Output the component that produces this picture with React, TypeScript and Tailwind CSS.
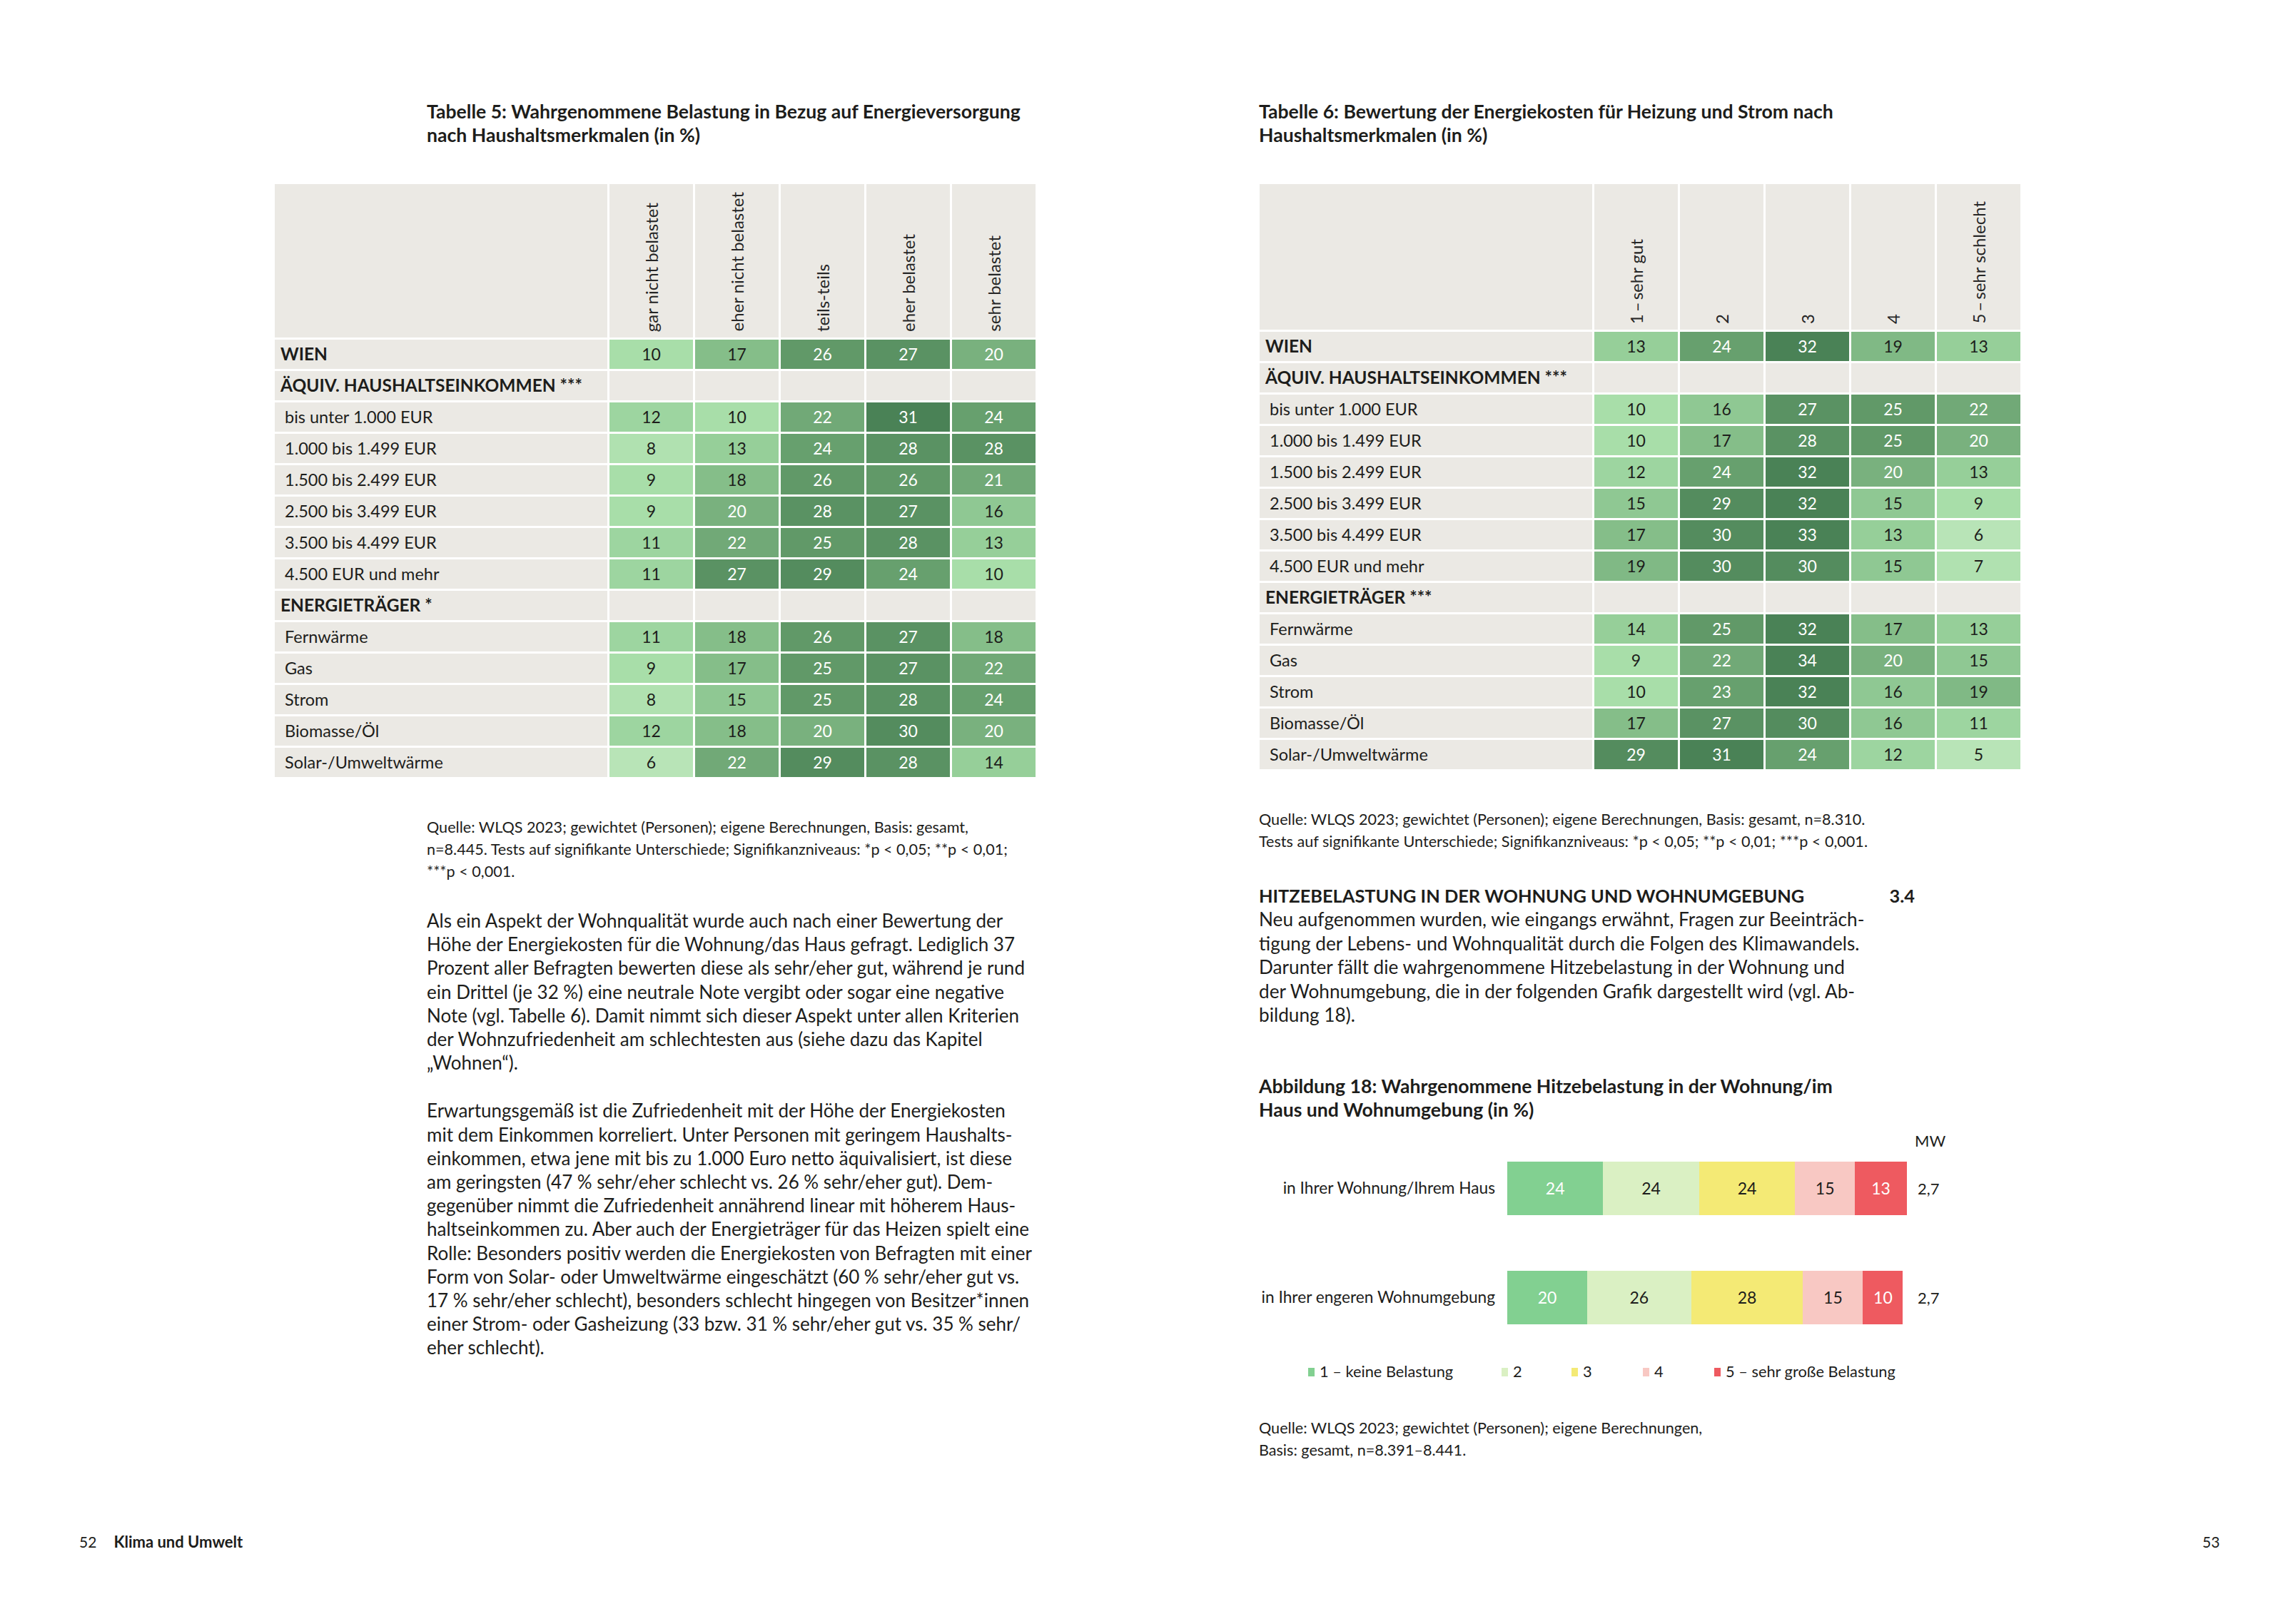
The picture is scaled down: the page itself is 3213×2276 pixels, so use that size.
import React from 'react';

type Row = { label: string; kind: 'total' | 'group' | 'item'; values?: number[] };

const table5: Row[] = [
    { label: 'WIEN', kind: 'total', values: [10, 17, 26, 27, 20] },
    { label: 'ÄQUIV. HAUSHALTSEINKOMMEN ***', kind: 'group' },
    { label: 'bis unter 1.000 EUR', kind: 'item', values: [12, 10, 22, 31, 24] },
    { label: '1.000 bis 1.499 EUR', kind: 'item', values: [8, 13, 24, 28, 28] },
    { label: '1.500 bis 2.499 EUR', kind: 'item', values: [9, 18, 26, 26, 21] },
    { label: '2.500 bis 3.499 EUR', kind: 'item', values: [9, 20, 28, 27, 16] },
    { label: '3.500 bis 4.499 EUR', kind: 'item', values: [11, 22, 25, 28, 13] },
    { label: '4.500 EUR und mehr', kind: 'item', values: [11, 27, 29, 24, 10] },
    { label: 'ENERGIETRÄGER *', kind: 'group' },
    { label: 'Fernwärme', kind: 'item', values: [11, 18, 26, 27, 18] },
    { label: 'Gas', kind: 'item', values: [9, 17, 25, 27, 22] },
    { label: 'Strom', kind: 'item', values: [8, 15, 25, 28, 24] },
    { label: 'Biomasse/Öl', kind: 'item', values: [12, 18, 20, 30, 20] },
    { label: 'Solar-/Umweltwärme', kind: 'item', values: [6, 22, 29, 28, 14] },
];

const table6: Row[] = [
    { label: 'WIEN', kind: 'total', values: [13, 24, 32, 19, 13] },
    { label: 'ÄQUIV. HAUSHALTSEINKOMMEN ***', kind: 'group' },
    { label: 'bis unter 1.000 EUR', kind: 'item', values: [10, 16, 27, 25, 22] },
    { label: '1.000 bis 1.499 EUR', kind: 'item', values: [10, 17, 28, 25, 20] },
    { label: '1.500 bis 2.499 EUR', kind: 'item', values: [12, 24, 32, 20, 13] },
    { label: '2.500 bis 3.499 EUR', kind: 'item', values: [15, 29, 32, 15, 9] },
    { label: '3.500 bis 4.499 EUR', kind: 'item', values: [17, 30, 33, 13, 6] },
    { label: '4.500 EUR und mehr', kind: 'item', values: [19, 30, 30, 15, 7] },
    { label: 'ENERGIETRÄGER ***', kind: 'group' },
    { label: 'Fernwärme', kind: 'item', values: [14, 25, 32, 17, 13] },
    { label: 'Gas', kind: 'item', values: [9, 22, 34, 20, 15] },
    { label: 'Strom', kind: 'item', values: [10, 23, 32, 16, 19] },
    { label: 'Biomasse/Öl', kind: 'item', values: [17, 27, 30, 16, 11] },
    { label: 'Solar-/Umweltwärme', kind: 'item', values: [29, 31, 24, 12, 5] },
];

// heat map shade per value
const shade = (v: number) => {
    if (v <= 6) return 'bg-[#b8e4b7]';
    if (v <= 8) return 'bg-[#b0e1b0]';
    if (v <= 10) return 'bg-[#a8dea9]';
    if (v <= 12) return 'bg-[#9dd5a0]';
    if (v <= 14) return 'bg-[#96cf99]';
    if (v <= 16) return 'bg-[#8fc893]';
    if (v <= 18) return 'bg-[#85be89]';
    if (v <= 19) return 'bg-[#80b985]';
    if (v <= 20) return 'bg-[#79b17e]';
    if (v <= 22) return 'bg-[#71a977]';
    if (v <= 24) return 'bg-[#67a06e]';
    if (v <= 26) return 'bg-[#619968]';
    if (v <= 28) return 'bg-[#5a9263]';
    if (v <= 30) return 'bg-[#548c5e]';
    return 'bg-[#4a8256]';
};

const HeatTable = ({ rows, heads, headH }: { rows: Row[]; heads: string[]; headH: string }) => (
    <div className="grid grid-cols-[466px_repeat(5,117px)] gap-[3px] bg-white w-[1066px]">
        <div className={`bg-[#ebe9e4] ${headH}`}></div>
        {heads.map(h => (
            <div key={h} className={`bg-[#ebe9e4] ${headH} flex items-end justify-center pb-[8px]`}>
                <span className="[writing-mode:vertical-rl] rotate-180 text-[24px] leading-[28px] text-[#262626] whitespace-nowrap">{h}</span>
            </div>
        ))}
        {rows.map(r => (
            <React.Fragment key={r.label}>
                <div
                    className={`bg-[#ebe9e4] h-[41px] flex items-center text-[#1d1d1b] whitespace-nowrap ${r.kind === 'item' ? 'pl-[14px] text-[23.5px]' : 'pl-[8px] font-bold text-[24.5px]'}`}
                >
                    {r.label}
                </div>
                {r.values
                    ? r.values.map((v, i) => (
                          <div
                              key={i}
                              className={`h-[41px] flex items-center justify-center text-[23px] ${shade(v)} ${v >= 20 ? 'text-white' : 'text-[#1d1d1b]'}`}
                          >
                              {v}
                          </div>
                      ))
                    : [0, 1, 2, 3, 4].map(i => <div key={i} className="h-[41px] bg-[#ebe9e4]"></div>)}
            </React.Fragment>
        ))}
    </div>
);

const Lines = ({ lines, className }: { lines: string[]; className: string }) => (
    <div className={className}>
        {lines.map((l, i) => (
            <div key={i} className="whitespace-nowrap">{l}</div>
        ))}
    </div>
);

const bars = [
    { label: 'in Ihrer Wohnung/Ihrem Haus', values: [24, 24, 24, 15, 13], mw: '2,7' },
    { label: 'in Ihrer engeren Wohnumgebung', values: [20, 26, 28, 15, 10], mw: '2,7' },
];
const barColors = ['bg-[#82d091]', 'bg-[#daf0c3]', 'bg-[#f4ea75]', 'bg-[#f8c8c3]', 'bg-[#ee5a60]'];
const barText = ['text-white', 'text-[#1d1d1b]', 'text-[#1d1d1b]', 'text-[#1d1d1b]', 'text-white'];

const legend = [
    { label: '1 – keine Belastung', w: 'w-[271px]' },
    { label: '2', w: 'w-[98px]' },
    { label: '3', w: 'w-[100px]' },
    { label: '4', w: 'w-[100px]' },
    { label: '5 – sehr große Belastung', w: 'w-[280px]' },
];

export default function App() {
    return (
        <div className="w-[3213px] h-[2276px] bg-white flex font-['Lato','Open_Sans',sans-serif] text-[#1d1d1b]">
            {/* left page */}
            <div className="w-[1606px] h-full flex flex-col">
                <Lines
                    className="ml-[598px] mt-[140px] text-[26.6px] leading-[33px] font-bold"
                    lines={['Tabelle 5: Wahrgenommene Belastung in Bezug auf Energieversorgung', 'nach Haushaltsmerkmalen (in %)']}
                />
                <div className="ml-[385px] mt-[52px]">
                    <HeatTable
                        rows={table5}
                        headH="h-[215px]"
                        heads={['gar nicht belastet', 'eher nicht belastet', 'teils-teils', 'eher belastet', 'sehr belastet']}
                    />
                </div>
                <Lines
                    className="ml-[598px] mt-[55px] text-[21.6px] leading-[31px]"
                    lines={[
                        'Quelle: WLQS 2023; gewichtet (Personen); eigene Berechnungen, Basis: gesamt,',
                        'n=8.445. Tests auf signifikante Unterschiede; Signifikanzniveaus: *p < 0,05; **p < 0,01;',
                        '***p < 0,001.',
                    ]}
                />
                <Lines
                    className="ml-[598px] mt-[37px] text-[26px] leading-[33.2px]"
                    lines={[
                        'Als ein Aspekt der Wohnqualität wurde auch nach einer Bewertung der',
                        'Höhe der Energiekosten für die Wohnung/das Haus gefragt. Lediglich 37',
                        'Prozent aller Befragten bewerten diese als sehr/eher gut, während je rund',
                        'ein Drittel (je 32\u202f%) eine neutrale Note vergibt oder sogar eine negative',
                        'Note (vgl. Tabelle 6). Damit nimmt sich dieser Aspekt unter allen Kriterien',
                        'der Wohnzufriedenheit am schlechtesten aus (siehe dazu das Kapitel',
                        '„Wohnen“).',
                    ]}
                />
                <Lines
                    className="ml-[598px] mt-[34px] text-[26px] leading-[33.2px]"
                    lines={[
                        'Erwartungsgemäß ist die Zufriedenheit mit der Höhe der Energiekosten',
                        'mit dem Einkommen korreliert. Unter Personen mit geringem Haushalts-',
                        'einkommen, etwa jene mit bis zu 1.000 Euro netto äquivalisiert, ist diese',
                        'am geringsten (47\u202f% sehr/eher schlecht vs. 26\u202f% sehr/eher gut). Dem-',
                        'gegenüber nimmt die Zufriedenheit annährend linear mit höherem Haus-',
                        'haltseinkommen zu. Aber auch der Energieträger für das Heizen spielt eine',
                        'Rolle: Besonders positiv werden die Energiekosten von Befragten mit einer',
                        'Form von Solar- oder Umweltwärme eingeschätzt (60\u202f% sehr/eher gut vs.',
                        '17\u202f% sehr/eher schlecht), besonders schlecht hingegen von Besitzer*innen',
                        'einer Strom- oder Gasheizung (33 bzw. 31\u202f% sehr/eher gut vs. 35\u202f% sehr/',
                        'eher schlecht).',
                    ]}
                />
                <div className="ml-[111px] mt-[240px] flex items-center h-[30px] text-[21px]">
                    <span>52</span>
                    <span className="ml-[24px] font-bold text-[22px]">Klima und Umwelt</span>
                </div>
            </div>

            {/* right page */}
            <div className="w-[1607px] h-full flex flex-col">
                <Lines
                    className="ml-[158px] mt-[140px] text-[26.6px] leading-[33px] font-bold"
                    lines={['Tabelle 6: Bewertung der Energiekosten für Heizung und Strom nach', 'Haushaltsmerkmalen (in %)']}
                />
                <div className="ml-[159px] mt-[52px]">
                    <HeatTable
                        rows={table6}
                        headH="h-[204px]"
                        heads={['1\u2009\u2013\u2009sehr gut', '2', '3', '4', '5\u2009\u2013\u2009sehr schlecht']}
                    />
                </div>
                <Lines
                    className="ml-[158px] mt-[55px] text-[21.6px] leading-[31px]"
                    lines={[
                        'Quelle: WLQS 2023; gewichtet (Personen); eigene Berechnungen, Basis: gesamt, n=8.310.',
                        'Tests auf signifikante Unterschiede; Signifikanzniveaus: *p < 0,05; **p < 0,01; ***p < 0,001.',
                    ]}
                />
                <div className="ml-[158px] mt-[44px] w-[919px] flex justify-between text-[25.4px] leading-[33px] font-bold">
                    <span>HITZEBELASTUNG IN DER WOHNUNG UND WOHNUMGEBUNG</span>
                    <span>3.4</span>
                </div>
                <Lines
                    className="ml-[158px] text-[26.2px] leading-[33.5px]"
                    lines={[
                        'Neu aufgenommen wurden, wie eingangs erwähnt, Fragen zur Beeinträch-',
                        'tigung der Lebens- und Wohnqualität durch die Folgen des Klimawandels.',
                        'Darunter fällt die wahrgenommene Hitzebelastung in der Wohnung und',
                        'der Wohnumgebung, die in der folgenden Grafik dargestellt wird (vgl. Ab-',
                        'bildung 18).',
                    ]}
                />
                <Lines
                    className="ml-[158px] mt-[66px] text-[26.6px] leading-[33px] font-bold"
                    lines={['Abbildung 18: Wahrgenommene Hitzebelastung in der Wohnung/im', 'Haus und Wohnumgebung (in %)']}
                />
                <div className="ml-[1077px] mt-[12px] h-[30px] leading-[30px] text-[22px]">MW</div>

                <div className="ml-[158px] mt-[14px] flex flex-col gap-[78px]">
                    {bars.map(b => (
                        <div key={b.label} className="flex items-center h-[75px]">
                            <div className="w-[331px] text-right text-[22.7px] whitespace-nowrap">{b.label}</div>
                            <div className="ml-[17px] w-[560px] h-full flex">
                                {b.values.map((v, i) => (
                                    <div
                                        key={i}
                                        className={`h-full flex items-center justify-center text-[23px] ${barColors[i]} ${barText[i]}`}
                                        style={{ width: `${v}%` }}
                                    >
                                        {v}
                                    </div>
                                ))}
                            </div>
                            <div className="ml-[15px] text-[22px]">{b.mw}</div>
                        </div>
                    ))}
                </div>

                <div className="ml-[227px] mt-[52px] h-[30px] flex items-center text-[21.8px]">
                    {legend.map((l, i) => (
                        <div key={l.label} className={`${l.w} flex items-center`}>
                            <span className={`w-[9px] h-[12px] ${barColors[i]}`}></span>
                            <span className="ml-[7px] whitespace-nowrap">{l.label}</span>
                        </div>
                    ))}
                </div>

                <Lines
                    className="ml-[158px] mt-[48px] text-[21.6px] leading-[31px]"
                    lines={['Quelle: WLQS 2023; gewichtet (Personen); eigene Berechnungen,', 'Basis: gesamt, n=8.391–8.441.']}
                />
                <div className="ml-[1480px] mt-[98px] h-[30px] flex items-center text-[21px]">53</div>
            </div>
        </div>
    );
}
